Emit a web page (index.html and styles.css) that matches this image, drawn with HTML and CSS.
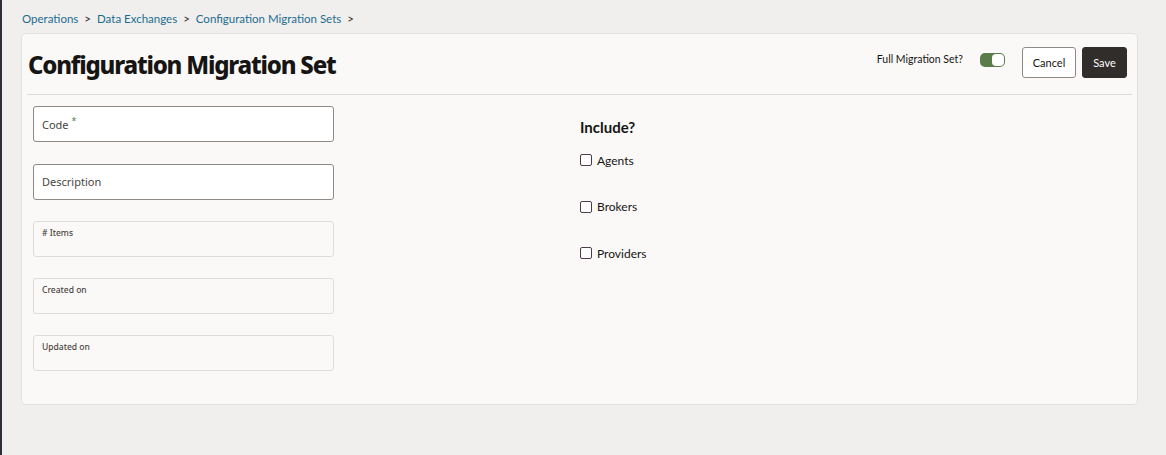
FILE: index.html
```html
<!DOCTYPE html>
<html lang="en">
<head>
    <meta charset="UTF-8">
    <title>Configuration Migration Set</title>
    <link rel="stylesheet" href="styles.css">
</head>
<body>
    <nav class="crumbs">
        <a href="#">Operations</a><span class="sep">&gt;</span><a href="#">Data Exchanges</a><span class="sep">&gt;</span><a href="#">Configuration Migration Sets</a><span class="sep">&gt;</span>
    </nav>

    <main class="card">
        <header class="card-head">
            <h1>Configuration Migration Set</h1>
            <div class="actions">
                <label class="switch-label">Full Migration Set?</label>
                <span class="switch on"><span class="knob"></span></span>
                <button class="btn">Cancel</button>
                <button class="btn primary">Save</button>
            </div>
        </header>

        <div class="card-body">
            <div class="fields">
                <div class="field edit"><span>Code <sup>*</sup></span></div>
                <div class="field edit"><span>Description</span></div>
                <div class="field readonly"><span># Items</span></div>
                <div class="field readonly"><span>Created on</span></div>
                <div class="field readonly"><span>Updated on</span></div>
            </div>

            <div class="include">
                <h2>Include?</h2>
                <label class="check"><span class="box"></span>Agents</label>
                <label class="check"><span class="box"></span>Brokers</label>
                <label class="check"><span class="box"></span>Providers</label>
            </div>
        </div>
    </main>
</body>
</html>
```

FILE: styles.css
```css
* {
    margin: 0;
    padding: 0;
    box-sizing: border-box;
}

body {
    background-color: #f1efed;
    border-left: 2px solid #2b2f36;
    min-height: 455px;
    font-family: "Noto Sans", sans-serif;
    color: #161513;
}

.crumbs {
    padding: 12px 0 0 20px;
    height: 33px;
    font-family: "Lato", sans-serif;
    font-size: 11.5px;
}

.crumbs a {
    color: #1a6d90;
    text-decoration: none;
}

.crumbs .sep {
    margin: 0 6px 0 6px;
    color: #312d2a;
}

.card {
    margin: 0 28px 0 19px;
    background-color: #faf9f8;
    border: 1px solid #e4e1dd;
    border-radius: 5px;
    height: 372px;
}

.card-head {
    margin: 0 5px;
    height: 61px;
    border-bottom: 1px solid #dedbd7;
    display: flex;
    align-items: center;
    justify-content: space-between;
}

h1 {
    font-size: 24px;
    font-weight: 800;
    letter-spacing: -1.2px;
    padding: 0 0 0 1px;
}

.actions {
    display: flex;
    align-items: center;
    padding-right: 5px;
    margin-top: -4px;
}

.switch-label {
    font-family: "Lato", sans-serif;
    font-size: 10.5px;
    margin-right: 17px;
    margin-top: -6px;
}

.switch {
    width: 25px;
    height: 14px;
    border-radius: 5px;
    background-color: #5a7b4a;
    display: flex;
    justify-content: flex-end;
    padding: 1px;
    margin-right: 17px;
    margin-top: -5px;
}

.knob {
    width: 12px;
    height: 12px;
    border-radius: 4px;
    background-color: #fff;
}

.btn {
    font-family: "Lato", sans-serif;
    font-size: 11px;
    height: 31px;
    width: 54px;
    border-radius: 3px;
    border: 1px solid #8f8a85;
    background-color: #fff;
    color: #161513;
}

.btn.primary {
    width: 45px;
    margin-left: 6px;
    background-color: #312d2a;
    border-color: #312d2a;
    color: #fff;
}

.card-body {
    display: flex;
    padding: 11px 0 0 11px;
}

.fields {
    width: 301px;
    display: flex;
    flex-direction: column;
    gap: 21px;
}

.field {
    height: 36px;
    border-radius: 3px;
    color: #4a4541;
}

.field:first-child {
    margin-bottom: 1px;
}

.field.edit {
    background-color: #fff;
    border: 1px solid #8f8a85;
    display: flex;
    align-items: center;
    padding: 0 0 2px 8px;
    font-size: 11px;
}

.field.edit sup {
    font-size: 9px;
    color: #5a7b4a;
}

.field.readonly {
    border: 1px solid #e0ddd9;
    padding: 5px 0 0 8px;
    font-size: 8.5px;
    font-weight: 500;
}

.include {
    margin-left: 246px;
    padding-top: 12px;
}

.include h2 {
    font-family: "Lato", sans-serif;
    font-size: 15px;
    font-weight: 700;
    margin-bottom: 18px;
}

.check {
    display: flex;
    align-items: center;
    font-family: "Lato", sans-serif;
    font-size: 12px;
    height: 12px;
    margin-bottom: 34.5px;
}

.check .box {
    width: 12px;
    height: 12px;
    border: 1.5px solid #4c3c4c;
    border-radius: 2px;
    background-color: #fff;
    margin-right: 5px;
}
```
